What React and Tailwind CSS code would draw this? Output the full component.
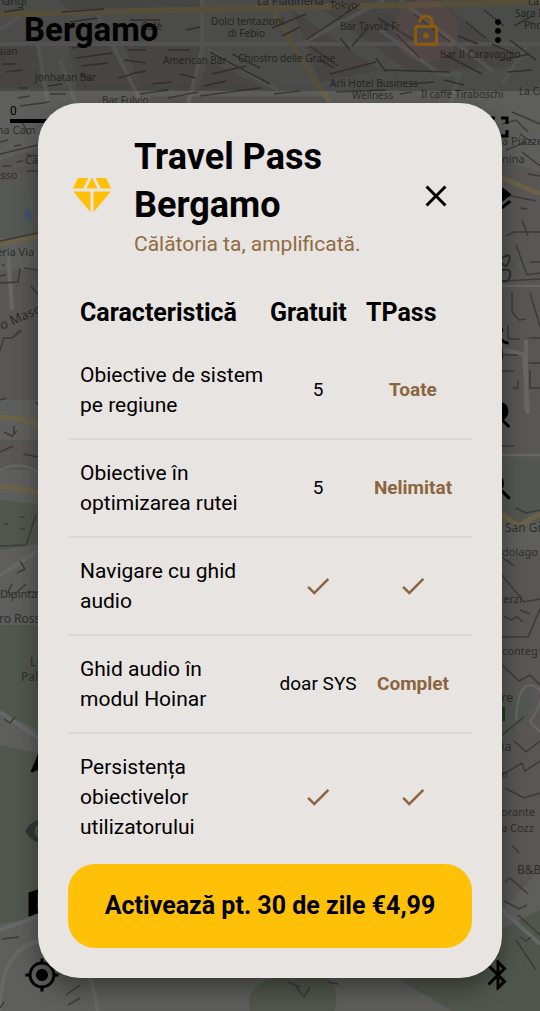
// src/App.jsx
import React from 'react';
import {
    MdBluetooth,
    MdCheck,
    MdClose,
    MdDiamond,
    MdDirectionsWalk,
    MdFullscreen,
    MdLayers,
    MdMap,
    MdMoreVert,
    MdMyLocation,
    MdNavigation,
    MdOutlineLockOpen,
    MdSearch,
    MdVisibility,
} from 'react-icons/md';

const features = [
    { name: 'Obiective de sistem pe regiune', free: '5', pass: 'Toate' },
    { name: 'Obiective în optimizarea rutei', free: '5', pass: 'Nelimitat' },
    { name: 'Navigare cu ghid audio', free: true, pass: true },
    // "modul Hoinar" stays together on one line
    { name: 'Ghid audio în modul\u00a0Hoinar', free: 'doar SYS', pass: 'Complet' },
    { name: 'Persistența obiectivelor utilizatorului', free: true, pass: true },
];

// x, y, text, size
const labels = [
    [-6, 5, 'mangi', 11],
    [257, 5, 'La Piadineria', 11],
    [330, 9, 'Tokyo', 10],
    [528, 5, 'La', 10],
    [211, 25, 'Dolci tentazioni', 10],
    [228, 37, 'di Febio', 10],
    [141, 30, 'Café', 10],
    [340, 30, 'Bar Tavola Fr', 10],
    [515, 17, 'Sara In', 10],
    [524, 29, 'Pho', 10],
    [-8, 55, 'Asian', 10],
    [163, 64, 'American Bar', 10],
    [238, 62, 'Chiostro delle Grazie', 10],
    [440, 58, 'Bar Il Caravaggio', 10],
    [35, 81, 'Jonhatan Bar', 10],
    [330, 87, 'Arli Hotel Business', 10],
    [352, 99, 'Wellness', 10],
    [421, 98, 'Il caffè Tiraboschi', 10],
    [519, 95, 'La Ca', 10],
    [102, 104, 'Bar Fulvio', 10],
    [-10, 134, 'ona Cam', 11],
    [25, 164, 'Ca', 11],
    [-6, 179, 'asso', 11],
    [-8, 256, 'teria Via', 11],
    [502, 145, 'a Piazzet', 11],
    [502, 163, 'nina', 11],
    [505, 532, 'San Gi', 12],
    [502, 556, 'dolago', 11],
    [503, 603, 'erzi', 11],
    [502, 655, 'conteg', 11],
    [501, 702, 're', 13],
    [501, 751, 'ia', 13],
    [501, 778, 'o', 11],
    [501, 816, 'orante', 11],
    [501, 832, 'a Cozz', 11],
    [517, 874, 'B&B', 12],
    [0, 598, 'Dipinta', 11],
    [-1, 623, 'ro Ross', 12],
    [30, 666, 'L', 12],
    [21, 681, 'Pal', 12],
];

const CityMap = () => (
    <svg
        className="absolute inset-0 h-full w-full"
        viewBox="0 0 540 1011"
        preserveAspectRatio="xMidYMin slice"
        aria-hidden="true"
    >
        <rect width="540" height="1011" fill="#5e5e5d" />

        {/* Built-up blocks */}
        <g fill="#595755">
            <path d="M60 0h140v10L70 14zM0 48l38-4 6 44H0zM68 46l42-2 32 46H78zM124 46h78l-12 44h-48zM208 60l60 30h-70z" />
            <path d="M292 10l88 60-60 12zM310 0h130l80 66-110 6zM0 160l38-12v90H0zM502 160l38 12v300h-38zM502 560l38-10v320l-38 40z" />
            <path d="M150 96h180v8H150zM0 270h38v130H0zM0 440h38v30H0z" />
        </g>

        {/* Parks */}
        <path d="M0 190q20-16 32 4l2 40-34 4z" fill="#545a53" />
        <path d="M25 208l5 2 3 12-8-4z" fill="#40546c" />
        <path d="M0 500l38 4v40L0 550zM0 625h38v105L0 712zM0 745l38 8v165L0 924z" fill="#51574e" />
        <path d="M502 460h38v62h-38zM502 235l14 30-14 20zM502 700l30-10v20l-30 35z" fill="#535751" />
        <path d="M250 1011q-8-34 50-36h26q16 16 8 36zM400 980l140-70v101H452z" fill="#50564d" />

        {/* Minor streets */}
        <g fill="none" stroke="#686767" strokeWidth="4">
            <path d="M0 44h540M38 44l10 60M60 60l16 44M96 12l46 92M202 0v50l-14 54M208 50l70 40" />
            <path d="M300 44l84-44M400 0l94 72M380 30l60 44h20l-10 30M502 84l26-40h12" />
            <path d="M0 30l26-18M8 250l4 60M526 340v70M502 350l22 4 4 60" />
            <path d="M0 575l38-24M0 712l38 26M0 930l38-14q40-10 60 95M502 910l38 34M0 1011q0-60 38-70" />
            <path d="M502 286h38M502 455h38M0 470q20-10 38 2M516 720q2-40 18-34t-4 36l10 10" strokeWidth="2" />
        </g>

        {/* Main roads */}
        <g fill="none" stroke="#6b6248" strokeWidth="5">
            <path d="M0 14L540 2" strokeWidth="6" />
            <path d="M268 0l32 58 32 48M0 244l38-8M502 178l38 16M0 417l20 2 18 6M0 486l38 6M502 514l16 12 22-12" />
        </g>

        {/* Building outlines */}
        <g fill="none" stroke="#3c3b3a" strokeWidth="1.5">
            <path d="M4 12l20-3M62 12l42-3M70 22l28-4M130 20h30M186 30l14-3M72 48l20-3M76 58l36-5M82 66l26-3M80 74l12 6M128 50h18M124 60l22 3M168 50h22M130 74l16-3M152 84l20-2M180 74l16 4" />
            <path d="M2 64h14M6 72l16-2M18 88h10M48 86l14-2M50 94h16M18 98l12-2M20 106l30-4M118 78l12-3M140 94l28-4M168 98l30-6M200 96l60-8M210 52l60 32M212 74l34-8M204 86l22-5M232 54l28 14" />
            <path d="M272 28l34-14M282 36l18-9M306 40l54-36M310 46l28 20M320 60l14 8M340 38l10 12M352 46l14-16M378 18l36 22M330 74l46-12M384 70l66 2M376 58l10 14M396 34l24 24M414 14l36 28M440 52l42 22M458 36l20 8M466 22l20 16M484 10l20 16M492 44l22 10M500 60l30-6M508 72l24-2M336 92l50-2M410 84l24-2M444 80l20 5M274 94l26-3M400 94l12-2M510 40l26 20M514 26l18-10" />
            <path d="M0 142l8-2M14 146l7-1M2 166h9M16 162l7-1M26 155l12 1M26 171h12M22 122l7 13M0 154l38-9M0 241l38-8M2 265h3M0 276l6-1M0 283l18-1 2-14M24 268l14 2M0 350l4-12h8l8-8M12 338l10-7M0 400l6-2M4 432l8 4 5-5M14 426v8M0 452l13-6M23 454l15 3M20 517h5M4 524h4M20 529h5M0 546l26-1 10-30M36 402l2 3M31 286l7 9" />
            <path d="M502 124l14-4 12 12M512 112l28 12M520 134l14 10M506 150l20-8M522 152l18 14M528 174l12 2M502 194l34 7M520 208l7 1M506 236l8-4h26M522 220l6 16M516 245l11 30 13-2M530 262h10M502 281l38-2M512 292v20l7 8 7-1M530 293l10 33M508 325v14h12M529 338h11M502 355h16M529 363h11M502 371h12M530 370v18h10M518 380v8h-5M502 446h12M516 508l10 5 14-3" />
            <path d="M502 557l12 9M502 575l22 27 16-3M504 616l7 4 6-3 6 5M520 610l10 4M502 637h26l12-28M502 665l17 16 11-6 10 10M502 735l22-18M514 741l12 11 14-11M502 775l20-12 3 8 15-10M505 788l19 10 16-5M512 845l7 8M505 882l5-4 18 16M504 901l15 8 8-4M518 915l22 20M516 940l20 30M520 937l6 4 5-4" />
            <path d="M20 561l5 8-8 4M12 584l-4 8 4 4M26 584l-12 11M27 592h11M4 719l6 4 5-6M2 939l17-2M0 1008l4-6M66 995l14-10M68 1005l12-7M288 982l12 5M296 987l8 10 6-10M328 982l10 2" />
        </g>

        <text x="2" y="330" fontSize="13" fill="#2c2b2a" transform="rotate(-24 2 330)" className="font-['Noto_Sans']">
            o Maso
        </text>
        <path d="M502 258q10-6 7 3t-7 2M502 270q10-2 8 6t-8 4" fill="none" stroke="#2f2e2e" strokeWidth="2" />
        <path d="M502 707h3v14h-3z" fill="#1f3f1a" />

        {labels.map(([x, y, text, size]) => (
            <text key={text} x={x} y={y} fontSize={size} fill="#2e2e2e" className="font-['Noto_Sans']">
                {text}
            </text>
        ))}
    </svg>
);

const ObjectiveSearchIcon = () => (
    <svg viewBox="0 0 24 24" className="size-9" aria-hidden="true">
        <circle cx="12.5" cy="9.5" r="6.5" fill="currentColor" />
        <path d="M14 14.5l5.5 5.5" stroke="currentColor" strokeWidth="2" />
    </svg>
);

const MapButton = ({ label, className = '', children }) => (
    <button type="button" aria-label={label} className={`grid h-[72px] w-[84px] place-items-center ${className}`}>
        {children}
    </button>
);

const MapToolbar = () => (
    <header className="absolute inset-x-0 top-0 flex h-[91px] items-start justify-between bg-black/20 pl-6">
        <h1 className="pt-2 text-[33px] leading-[44px] font-bold">Bergamo</h1>
        <div className="flex pt-[13px]">
            <button type="button" aria-label="Travel Pass" className="relative grid w-[60px] place-items-center text-[#8c5a0a]">
                <span className="absolute size-16 rounded-full bg-[#8a5a5a]/15" />
                <MdOutlineLockOpen className="relative size-9" />
            </button>
            <button type="button" aria-label="Meniu" className="grid w-[84px] place-items-center">
                <MdMoreVert className="size-9" />
            </button>
        </div>
    </header>
);

const MapControls = () => (
    <>
        <div className="absolute top-[91px] right-0 flex flex-col">
            <MapButton label="Ecran complet"><MdFullscreen className="size-9" /></MapButton>
            <MapButton label="Straturi" className="mb-[72px]"><MdLayers className="size-9" /></MapButton>
            <MapButton label="Hoinar"><MdDirectionsWalk className="size-9" /></MapButton>
            <MapButton label="Caută obiective"><ObjectiveSearchIcon /></MapButton>
            <MapButton label="Caută"><MdSearch className="size-9" /></MapButton>
        </div>
        <div className="absolute bottom-0 left-0 flex flex-col">
            <MapButton label="Navigare"><MdNavigation className="size-9" /></MapButton>
            <MapButton label="Vizibilitate" className="text-[#363636]"><MdVisibility className="size-9" /></MapButton>
            <MapButton label="Hartă"><MdMap className="size-9" /></MapButton>
            <MapButton label="Locația mea"><MdMyLocation className="size-9" /></MapButton>
        </div>
        <div className="absolute right-0 bottom-0">
            <MapButton label="Bluetooth"><MdBluetooth className="size-9" /></MapButton>
        </div>
        <div className="absolute top-[103px] left-[10px] w-20 border-b-4 border-black text-[12px] leading-4">0</div>
    </>
);

const FeatureValue = ({ value }) => {
    if (value === true) {
        return <MdCheck className="mx-auto size-[30px] text-[#8b6540]" role="img" aria-label="Inclus" />;
    }
    return value;
};

const FeatureTable = () => (
    <table className="w-full table-fixed border-collapse">
        <colgroup>
            <col />
            <col className="w-24" />
            <col className="w-[106px]" />
        </colgroup>
        <thead>
            <tr className="h-[59px] text-left text-[25px] leading-[30px]">
                <th scope="col" className="pl-3 font-bold">Caracteristică</th>
                <th scope="col" className="font-bold">Gratuit</th>
                <th scope="col" className="font-bold">TPass</th>
            </tr>
        </thead>
        <tbody>
            {features.map((feature) => (
                <tr key={feature.name} className="border-b-2 border-[#dad7d5] last:border-b-0">
                    <th scope="row" className="py-[18px] pl-3 text-left text-[21px] leading-[30px] font-normal">
                        {feature.name}
                    </th>
                    <td className="text-center text-[19px]">
                        <FeatureValue value={feature.free} />
                    </td>
                    <td className="pr-3 text-center text-[19px] font-bold text-[#8b6540]">
                        <FeatureValue value={feature.pass} />
                    </td>
                </tr>
            ))}
        </tbody>
    </table>
);

const TravelPassDialog = () => (
    <section
        role="dialog"
        aria-labelledby="pass-title"
        className="w-full rounded-[42px] bg-[#e8e4e1] p-[30px] shadow-[0_10px_24px_rgba(0,0,0,0.4)]"
    >
        <div className="flex items-center">
            <MdDiamond className="size-12 shrink-0 text-[#ffc107]" />
            <div className="ml-[18px] flex-1">
                <h2 id="pass-title" className="text-[36px] leading-[48px] font-bold">Travel Pass Bergamo</h2>
                <p className="text-[21px] leading-[30px] whitespace-nowrap text-[#8f6b43]">Călătoria ta, amplificată.</p>
            </div>
            <button type="button" aria-label="Închide" className="grid size-[72px] shrink-0 place-items-center">
                <MdClose className="size-9" />
            </button>
        </div>

        <div className="mt-6">
            <FeatureTable />
        </div>

        <button
            type="button"
            className="mt-1 h-[84px] w-full rounded-[27px] bg-[#ffc107] text-[25px] font-bold"
        >
            Activează pt. 30 de zile €4,99
        </button>
    </section>
);

export default function App() {
    return (
        <main className="relative min-h-screen overflow-hidden bg-[#5e5e5d] font-[Roboto,sans-serif] text-black">
            <CityMap />
            <MapToolbar />
            <MapControls />
            <div className="relative flex min-h-screen items-start px-[38px] pt-[103px] pb-8">
                <TravelPassDialog />
            </div>
        </main>
    );
}
